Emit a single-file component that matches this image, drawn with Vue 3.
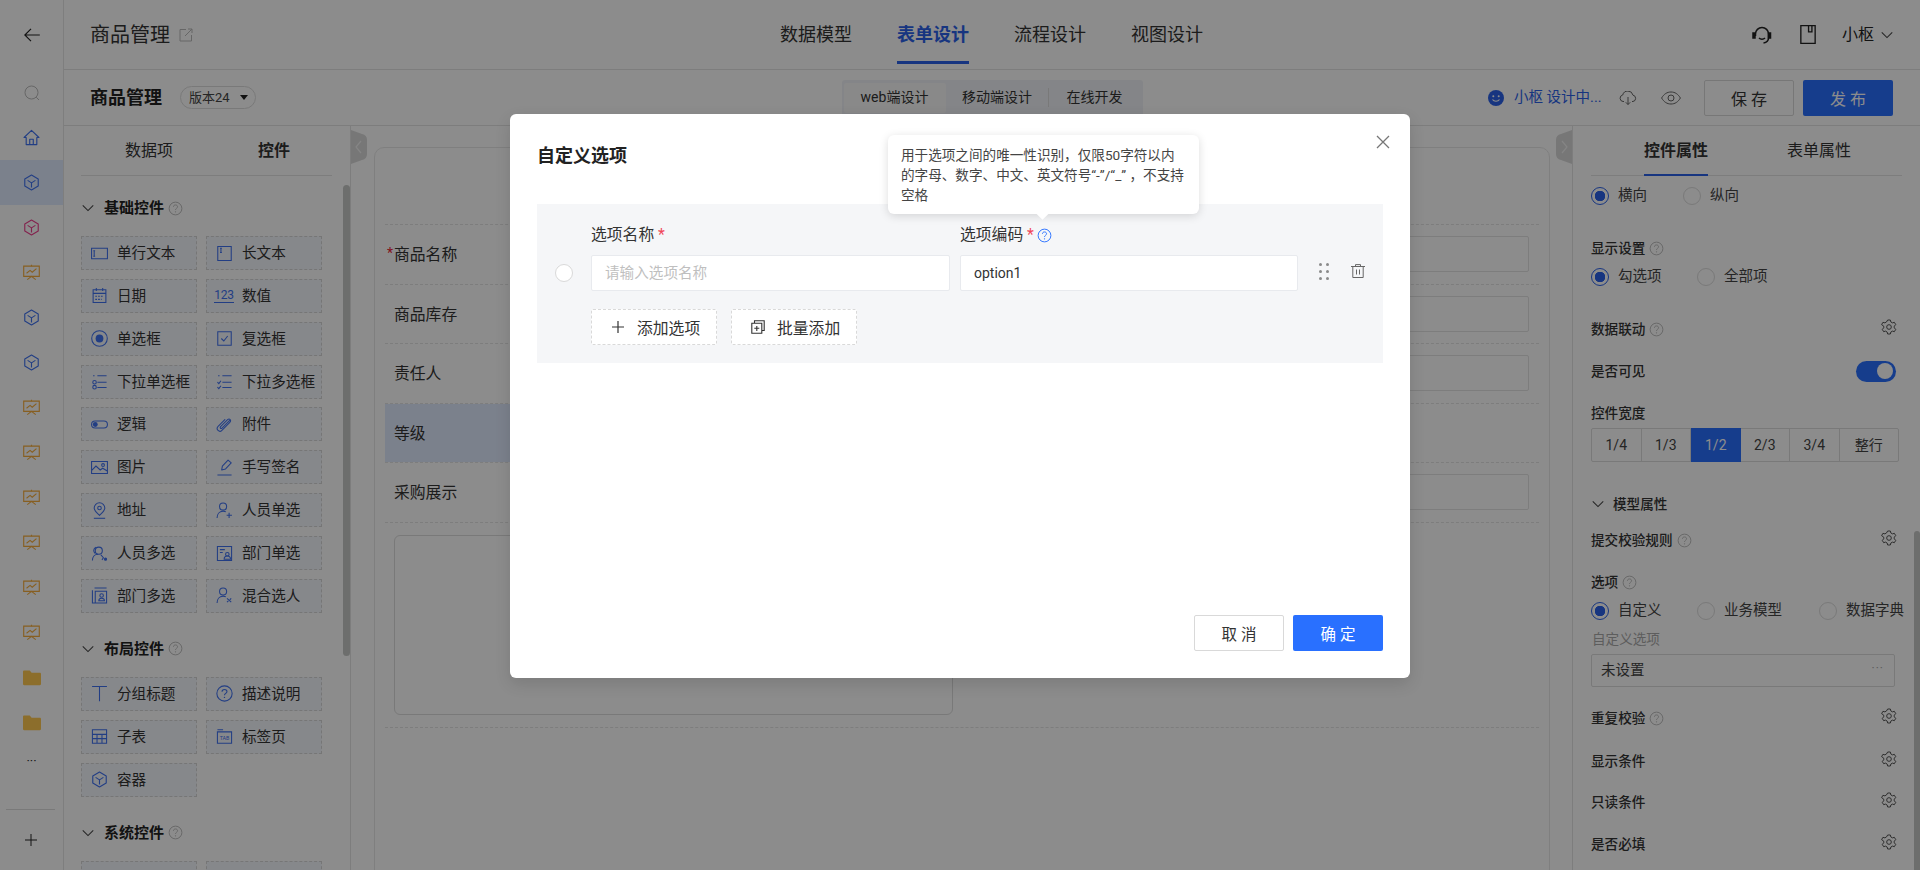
<script setup>
const railItems = [
  { id: 'i-home', tone: 'blue' },
  { id: 'i-cube', tone: 'blue', sel: true },
  { id: 'i-cube', tone: 'pink' },
  { id: 'i-board', tone: 'orange' },
  { id: 'i-cube', tone: 'blue' },
  { id: 'i-cube', tone: 'blue' },
  { id: 'i-board', tone: 'orange' },
  { id: 'i-board', tone: 'orange' },
  { id: 'i-board', tone: 'orange' },
  { id: 'i-board', tone: 'orange' },
  { id: 'i-board', tone: 'orange' },
  { id: 'i-board', tone: 'orange' },
  { id: 'i-folder', tone: 'folder' },
  { id: 'i-folder', tone: 'folder' },
]
const basic = [
  ['单行文本', 'i-single'], ['长文本', 'i-long'], ['日期', 'i-date'], ['数值', 'i-num'],
  ['单选框', 'i-radio'], ['复选框', 'i-check'], ['下拉单选框', 'i-drop'], ['下拉多选框', 'i-dropm'],
  ['逻辑', 'i-toggle'], ['附件', 'i-clip'], ['图片', 'i-pic'], ['手写签名', 'i-pen'],
  ['地址', 'i-pin'], ['人员单选', 'i-user'], ['人员多选', 'i-users'], ['部门单选', 'i-dept'],
  ['部门多选', 'i-deptm'], ['混合选人', 'i-mix'],
]
const layout = [
  ['分组标题', 'i-t'], ['描述说明', 'i-help'], ['子表', 'i-table'], ['标签页', 'i-tab'], ['容器', 'i-cube'],
]
const system = [['', ''], ['', '']]
const sections = [
  { title: '基础控件', items: basic },
  { title: '布局控件', items: layout },
  { title: '系统控件', items: system },
]
const widths = ['1/4', '1/3', '1/2', '2/3', '3/4', '整行']
</script>

<template>
  <div class="page">
    <svg class="sprite" aria-hidden="true">
      <symbol id="i-home" viewBox="0 0 24 24" fill="none" stroke="currentColor" stroke-width="1.6" stroke-linejoin="round"><path d="M1.5 12 12 2l10.5 10h-3v10h-15V12z"/><path d="M9.5 22v-7.5h5V22"/></symbol>
      <symbol id="i-cube" viewBox="0 0 24 24" fill="none" stroke="currentColor" stroke-width="1.6" stroke-linejoin="round"><path d="M12 1.5 21.5 7v10L12 22.500 2.500 17V7z"/><path d="M6.500 9 12 12.500 17.500 9M12 12.500V19"/></symbol>
      <symbol id="i-board" viewBox="0 0 24 24" fill="none" stroke="currentColor" stroke-width="1.6"><path d="M1 3h22v14.500H1zM1 3h22"/><path d="M5 13l5-4 3 2.500L19 6.500M6 22l6-4.500 6 4.500M12 1v2"/></symbol>
      <symbol id="i-folder" viewBox="0 0 24 24"><path fill="currentColor" d="M0 3.500C0 2.700.7 2 1.500 2H9l2.500 3h11c.8 0 1.500.7 1.500 1.500V20c0 .8-.7 1.500-1.500 1.500h-21C.7 21.500 0 20.800 0 20z"/></symbol>
      <symbol id="i-single" viewBox="0 0 24 24" fill="none" stroke="currentColor" stroke-width="1.500"><path d="M.8 4.500h22.400v15H.8zM4.500 8v8M3.200 8h2.600M3.200 16h2.600"/></symbol>
      <symbol id="i-long" viewBox="0 0 24 24" fill="none" stroke="currentColor" stroke-width="1.500"><path d="M2.500 2h19v20h-19zM7 4.500v6M5.700 4.500h2.600M5.700 10.500h2.600"/></symbol>
      <symbol id="i-date" viewBox="0 0 24 24" fill="none" stroke="currentColor" stroke-width="1.500"><path d="M3 4h18v18H3zM3 9h18M7.500 1.500v4M16.500 1.500v4"/><path stroke-dasharray="2.500 1.500" d="M6 13h12M6 17.500h9"/></symbol>
      <symbol id="i-radio" viewBox="0 0 24 24" fill="none" stroke="currentColor" stroke-width="1.500"><circle cx="12" cy="12" r="11"/><circle cx="12" cy="12" r="5.500" fill="currentColor" stroke="none"/></symbol>
      <symbol id="i-check" viewBox="0 0 24 24" fill="none" stroke="currentColor" stroke-width="1.500"><path d="M2.500 2.500h19v19h-19zM7.500 12l3.500 3.500 5.500-7"/></symbol>
      <symbol id="i-drop" viewBox="0 0 24 24" fill="none" stroke="currentColor" stroke-width="1.500"><path d="M3 4h2M9 4h13M9 13h13M9 20.500h13"/><circle cx="5" cy="13" r="2.500"/><circle cx="5" cy="20" r="2.500"/></symbol>
      <symbol id="i-dropm" viewBox="0 0 24 24" fill="none" stroke="currentColor" stroke-width="1.500"><path d="M3 4h2M9 4h13M9 13h13M9 20.500h13M2 13l2 2 3-4M2 20l2 2 3-4"/></symbol>
      <symbol id="i-toggle" viewBox="0 0 24 24" fill="none" stroke="currentColor" stroke-width="1.500"><rect x=".8" y="7" width="22.400" height="10" rx="5"/><circle cx="6" cy="12" r="3.500" fill="currentColor" stroke="none"/></symbol>
      <symbol id="i-clip" viewBox="0 0 24 24" fill="none" stroke="currentColor" stroke-width="1.500" stroke-linecap="round"><path d="M20 5.500 8.500 17c-1.500 1.500-3.500 0-2-2L16 5.500c3-3 6.500.5 3.500 3.500L8 20.500c-3 3-9-1.500-5-6l9.500-9.500"/></symbol>
      <symbol id="i-pic" viewBox="0 0 24 24" fill="none" stroke="currentColor" stroke-width="1.500"><path d="M.8 3.500h22.400v17H.8zM1 16l6-6 6 5.500 3.500-2.500 6.500 4"/><circle cx="17" cy="8.500" r="2"/></symbol>
      <symbol id="i-pen" viewBox="0 0 24 24" fill="none" stroke="currentColor" stroke-width="1.500" stroke-linejoin="round"><path d="M8 15.500 9 10l8-8.500 4.500 4L13.500 14zM2 22.500h20"/></symbol>
      <symbol id="i-pin" viewBox="0 0 24 24" fill="none" stroke="currentColor" stroke-width="1.500"><path d="M12 19C7 14.500 4.500 11.500 4.500 8.500a7.500 7.500 0 0 1 15 0c0 3-2.500 6-7.500 10.500z"/><circle cx="12" cy="8.500" r="2.500"/><path d="M4 23h16"/></symbol>
      <symbol id="i-user" viewBox="0 0 24 24" fill="none" stroke="currentColor" stroke-width="1.500"><circle cx="10" cy="6.500" r="5"/><path d="M1.500 22.500c0-5 3-9.500 8.500-9.500 1.500 0 3 .3 4 1M18.500 15v7.500M15 18.800h7.500"/></symbol>
      <symbol id="i-users" viewBox="0 0 24 24" fill="none" stroke="currentColor" stroke-width="1.500"><circle cx="11" cy="8" r="5"/><path d="M2 22c0-5 3-9 8-9M7 3C3 5 3 10 6 12M14 14l3.500 4-2 3"/><circle cx="20.500" cy="20" r="1.500" fill="currentColor"/></symbol>
      <symbol id="i-dept" viewBox="0 0 24 24" fill="none" stroke="currentColor" stroke-width="1.500"><path d="M2 2h20v20H2zM5.500 6.500h7M5.500 10.500h4"/><circle cx="16" cy="13" r="2.500"/><path d="M11.500 20c0-3 2-4.500 4.500-4.500s4.500 1.500 4.500 4.500z"/></symbol>
      <symbol id="i-deptm" viewBox="0 0 24 24" fill="none" stroke="currentColor" stroke-width="1.500"><path d="M5 1.500h17M2 4.500v18h20V6H6v16"/><circle cx="15" cy="12" r="2.500"/><path d="M11 19.500c0-2.500 2-3.500 4-3.500s4 1 4 3.500z"/></symbol>
      <symbol id="i-mix" viewBox="0 0 24 24" fill="none" stroke="currentColor" stroke-width="1.500"><circle cx="10" cy="6.500" r="5"/><path d="M1.500 22.500c0-5 3-9.500 8.500-9.500 1.500 0 3 .3 4 1M15.500 16l6 5.500M15.500 21.500l2-2M21.500 16l-2 2"/></symbol>
      <symbol id="i-t" viewBox="0 0 24 24" fill="none" stroke="currentColor" stroke-width="1.500"><path d="M1.500 2h21M12 2v21"/></symbol>
      <symbol id="i-help" viewBox="0 0 24 24" fill="none" stroke="currentColor" stroke-width="1.500"><circle cx="12" cy="12" r="10.800"/><path d="M8.500 9.500C8.500 7.500 10 6.300 12 6.300s3.500 1.200 3.500 3c0 2.500-3.500 2.700-3.500 5.200"/><circle cx="12" cy="17.500" r="1" fill="currentColor" stroke="none"/></symbol>
      <symbol id="i-table" viewBox="0 0 24 24" fill="none" stroke="currentColor" stroke-width="1.500"><path d="M2 2.500h20v19H2zM2 9h20M2 15h20M8.500 9v12.500M15.500 9v12.500"/></symbol>
      <symbol id="i-q" viewBox="0 0 16 16" fill="none" stroke="currentColor" stroke-width="1"><circle cx="8" cy="8" r="6.800"/><path d="M5.800 6.200C5.800 5 6.700 4.200 8 4.200s2.200.8 2.200 1.900c0 1.600-2.200 1.800-2.200 3.400"/><circle cx="8" cy="11.500" r=".7" fill="currentColor" stroke="none"/></symbol>
      <symbol id="i-gear" viewBox="0 0 24 24" fill="none" stroke="currentColor" stroke-width="1.500" stroke-linejoin="round"><path d="M10 1.500h4l.8 3 2.300 1.300 3-.8 2 3.500-2.200 2.200v2.600l2.200 2.200-2 3.500-3-.8-2.300 1.300-.8 3h-4l-.8-3-2.300-1.300-3 .8-2-3.500 2.200-2.200v-2.600L.9 8.500l2-3.500 3 .8 2.300-1.300z"/><circle cx="12" cy="12" r="3.500"/></symbol>
      <symbol id="i-chev" viewBox="0 0 16 16" fill="none" stroke="currentColor" stroke-width="1.200"><path d="M2 5l6 6 6-6"/></symbol>
    </svg>

    <aside class="rail">
      <div class="rail-cell rail-back">
        <svg class="rail-arrow" viewBox="0 0 16 16" fill="none" stroke="currentColor" stroke-width="1.200"><path d="M.8 8h15M7 1.800.8 8 7 14.200"/></svg>
      </div>
      <div class="rail-cell">
        <svg class="rail-search" viewBox="0 0 16 16" fill="none" stroke="currentColor" stroke-width="1"><circle cx="7.500" cy="7.500" r="6.500"/><path d="M12.200 12.200 15 15"/></svg>
      </div>
      <div v-for="(r, i) in railItems" :key="i" class="rail-cell" :class="[r.tone, { sel: r.sel }]">
        <svg class="rail-ic"><use :href="'#' + r.id" /></svg>
      </div>
      <div class="rail-more">···</div>
      <div class="rail-foot">
        <svg class="rail-plus" viewBox="0 0 12 12" fill="none" stroke="currentColor" stroke-width="1"><path d="M6 0v12M0 6h12"/></svg>
      </div>
    </aside>

    <div class="main">
      <header class="topbar">
        <div class="top-left">
          <span class="app-name">商品管理</span>
          <svg class="ext" viewBox="0 0 14 14" fill="none" stroke="currentColor" stroke-width="1"><path d="M7 1.500H1v11.500h11.500V7M6 8l7-7M9 1h4v4"/></svg>
        </div>
        <nav class="nav">
          <a class="nav-item">数据模型</a>
          <a class="nav-item active">表单设计</a>
          <a class="nav-item">流程设计</a>
          <a class="nav-item">视图设计</a>
        </nav>
        <div class="top-right">
          <svg class="headset" viewBox="0 0 20 20" fill="none" stroke="currentColor" stroke-width="1.500"><path d="M3.500 11V9a6.500 6.500 0 0 1 13 0v4c0 2.500-2 4.500-5 5"/><path d="M7 13c1.500 1.500 4.500 1.500 6 0"/><rect x="1" y="8" width="2" height="5" fill="currentColor"/><rect x="16.500" y="8" width="2" height="5" fill="currentColor"/></svg>
          <svg class="book" viewBox="0 0 14 17" fill="none" stroke="currentColor" stroke-width="1.200"><path d="M.6.6h12.800v15.800H.6zM7.500.6v5.500h3V.6"/></svg>
          <span class="user-name">小枢</span>
          <svg class="user-chev"><use href="#i-chev" /></svg>
        </div>
      </header>

      <div class="subbar">
        <div class="sub-left">
          <strong class="sub-title">商品管理</strong>
          <span class="version">版本24<i class="caret"></i></span>
        </div>
        <div class="modes">
          <span class="mode mode-web">web端设计</span>
          <span class="mode mode-mobile">移动端设计</span>
          <span class="mode mode-dev">在线开发</span>
        </div>
        <div class="sub-right">
          <svg class="smile" viewBox="0 0 16 16"><circle cx="8" cy="8" r="8" fill="currentColor"/><circle cx="5.300" cy="6.300" r="1" fill="#fff"/><circle cx="10.700" cy="6.300" r="1" fill="#fff"/><path d="M4.500 9.500c1.500 2.300 5.500 2.300 7 0" fill="none" stroke="#fff" stroke-width="1.100"/></svg>
          <span class="status">小枢 设计中...</span>
          <svg class="cloud" viewBox="0 0 18 14" fill="none" stroke="currentColor" stroke-width="1"><path d="M5 10.500H4A3.300 3.300 0 0 1 3.700 4 5.300 5.300 0 0 1 14 4.200a3.200 3.200 0 0 1 0 6.300h-1M9 6v7.500M6.800 11.300 9 13.500l2.200-2.200"/></svg>
          <svg class="eye" viewBox="0 0 20 14" fill="none" stroke="currentColor" stroke-width="1"><path d="M.6 7C3 3 6 1 10 1s7 2 9.400 6C17 11 14 13 10 13S3 11 .6 7z"/><circle cx="10" cy="7" r="3"/></svg>
          <button class="btn-save">保存</button>
          <button class="btn-pub">发布</button>
        </div>
      </div>

      <div class="body">
        <section class="left">
          <div class="tabs tabs-left">
            <span class="tab">数据项</span>
            <span class="tab strong">控件</span>
          </div>
          <div v-for="s in sections" :key="s.title" class="group">
            <div class="group-head">
              <svg class="chev"><use href="#i-chev" /></svg>
              <b>{{ s.title }}</b>
              <svg class="q"><use href="#i-q" /></svg>
            </div>
            <div class="widgets">
              <div v-for="(it, i) in s.items" :key="i" class="widget">
                <span class="w-ic">
                  <span v-if="it[1] === 'i-num'" class="num-ic">123</span>
                  <svg v-else-if="it[1] === 'i-tab'" class="w-svg" viewBox="0 0 24 24" fill="none" stroke="currentColor" stroke-width="1.500"><path d="M2 2.500h8M2 5.500h20v16H2z"/><text x="12" y="16.500" text-anchor="middle" font-size="7.500" fill="currentColor" stroke="none" font-family="Roboto, sans-serif">TAB</text></svg>
                  <svg v-else-if="it[1]" class="w-svg"><use :href="'#' + it[1]" /></svg>
                </span>
                <span class="w-text">{{ it[0] }}</span>
              </div>
            </div>
          </div>
          <i class="left-scroll"></i>
        </section>

        <section class="center">
          <svg class="handle handle-l" viewBox="0 0 16 34"><path d="M0 0 11 4q5 1 5 6v14q0 5-5 6L0 34z" fill="#d9d9d9"/><path d="M10 11l-5 6 5 6" fill="none" stroke="#f2f2f2" stroke-width="1.200"/></svg>
          <svg class="handle handle-r" viewBox="0 0 16 34"><path d="M16 0 5 4q-5 1-5 6v14q0 5 5 6l11 4z" fill="#d9d9d9"/><path d="M6 11l5 6-5 6" fill="none" stroke="#f2f2f2" stroke-width="1.200"/></svg>
          <div class="card">
            <div class="form-row"><span class="f-label"><em>*</em>商品名称</span><div class="f-input"></div></div>
            <div class="form-row"><span class="f-label">商品库存</span><div class="f-input"></div></div>
            <div class="form-row"><span class="f-label">责任人</span><div class="f-input"></div></div>
            <div class="form-row form-row-sel"><div class="sel-half"><span class="f-label">等级</span></div></div>
            <div class="form-row"><span class="f-label">采购展示</span><div class="f-input"></div></div>
            <div class="form-area"><div class="area-box"></div></div>
          </div>
        </section>

        <section class="right">
          <div class="tabs tabs-right">
            <span class="tab strong on">控件属性</span>
            <span class="tab">表单属性</span>
          </div>
          <div class="p-radios mt10">
            <label class="opt w92"><i class="radio on"></i>横向</label>
            <label class="opt"><i class="radio"></i>纵向</label>
          </div>
          <div class="p-row mt32"><span class="p-label">显示设置<svg class="q"><use href="#i-q" /></svg></span></div>
          <div class="p-radios mt9">
            <label class="opt w106"><i class="radio on"></i>勾选项</label>
            <label class="opt"><i class="radio"></i>全部项</label>
          </div>
          <div class="p-row mt32"><span class="p-label">数据联动<svg class="q"><use href="#i-q" /></svg></span><svg class="gear"><use href="#i-gear" /></svg></div>
          <div class="p-row mt22"><span class="p-label">是否可见</span><span class="switch"><i></i></span></div>
          <div class="p-row mt22"><span class="p-label">控件宽度</span></div>
          <div class="width-seg">
            <span v-for="(w, i) in widths" :key="w" class="w-cell" :class="{ on: i === 2 }">{{ w }}</span>
          </div>
          <div class="p-row model-head"><svg class="chev"><use href="#i-chev" /></svg><b class="p-label">模型属性</b></div>
          <div class="p-row mt16"><span class="p-label">提交校验规则<svg class="q"><use href="#i-q" /></svg></span><svg class="gear"><use href="#i-gear" /></svg></div>
          <div class="p-row mt22"><span class="p-label">选项<svg class="q"><use href="#i-q" /></svg></span></div>
          <div class="p-radios mt9">
            <label class="opt w106"><i class="radio on"></i>自定义</label>
            <label class="opt w122"><i class="radio"></i>业务模型</label>
            <label class="opt"><i class="radio"></i>数据字典</label>
          </div>
          <div class="p-hint">自定义选项</div>
          <div class="p-input">未设置<span class="p-dots">···</span></div>
          <div class="p-row mt21"><span class="p-label">重复校验<svg class="q"><use href="#i-q" /></svg></span><svg class="gear"><use href="#i-gear" /></svg></div>
          <div class="p-row mt23"><span class="p-label">显示条件</span><svg class="gear"><use href="#i-gear" /></svg></div>
          <div class="p-row mt21"><span class="p-label">只读条件</span><svg class="gear"><use href="#i-gear" /></svg></div>
          <div class="p-row mt22"><span class="p-label">是否必填</span><svg class="gear"><use href="#i-gear" /></svg></div>
          <i class="right-scroll"></i>
        </section>
      </div>
    </div>

    <div class="mask">
      <div class="modal">
        <h2 class="m-title">自定义选项</h2>
        <svg class="m-close" viewBox="0 0 14 14" fill="none" stroke="currentColor" stroke-width="1.300"><path d="M1 1l12 12M13 1 1 13"/></svg>
        <div class="tooltip">用于选项之间的唯一性识别，仅限50字符以内<br />的字母、数字、中文、英文符号“-”/“_” ，不支持<br />空格</div>
        <div class="m-panel">
          <div class="m-heads">
            <span class="m-head m-head-1">选项名称 <em>*</em></span>
            <span class="m-head">选项编码 <em>*</em><svg class="q-blue"><use href="#i-q" /></svg></span>
          </div>
          <div class="m-row">
            <span class="m-radio-col"><i class="m-radio"></i></span>
            <div class="m-input m-input-1 ph">请输入选项名称</div>
            <div class="m-input m-input-2">option1</div>
            <span class="m-drag"><i></i><i></i><i></i><i></i><i></i><i></i></span>
            <svg class="m-trash" viewBox="0 0 14 14" fill="none" stroke="currentColor" stroke-width="1"><path d="M0 2.500h14M4.500 2.500V.6h5v1.900M1.800 2.500v11h10.400v-11M5.500 5.500v5M8.500 5.500v5"/></svg>
          </div>
          <div class="m-actions">
            <button class="m-dash">
              <svg class="m-a-ic" viewBox="0 0 14 14" fill="none" stroke="currentColor" stroke-width="1.200"><path d="M7 1v12M1 7h12"/></svg>添加选项
            </button>
            <button class="m-dash">
              <svg class="m-a-ic" viewBox="0 0 14 14" fill="none" stroke="currentColor" stroke-width="1.100"><path d="M3.500 3V.8h9.700v9.700H11"/><path d="M.8 3.300h10v10H.8zM5.800 6v5M3.300 8.300h5"/></svg>批量添加
            </button>
          </div>
        </div>
        <div class="m-foot">
          <button class="m-cancel">取 消</button>
          <button class="m-ok">确 定</button>
        </div>
      </div>
    </div>
  </div>
</template>

<style>
html, body { margin: 0; background: #fff; }
</style>

<style scoped>
* { box-sizing: border-box; }
.page {
  position: relative; display: flex; width: 1920px; height: 870px; overflow: hidden; background: #fff; color: #333;
  font-family: Roboto, "Noto Sans CJK SC", sans-serif; font-size: 14px; line-height: 20px;
}
.sprite { position: absolute; width: 0; height: 0; }
i, em { font-style: normal; }
button { font-family: inherit; padding: 0; margin: 0; cursor: pointer; }

.rail { width: 64px; flex: none; height: 870px; display: flex; flex-direction: column; border-right: 1px solid #e6e6e6; background: #fff; }
.rail-cell { height: 45px; flex: none; display: flex; align-items: center; justify-content: center; }
.rail-back { height: 70px; color: #222; }
.rail-arrow { width: 16px; height: 16px; }
.rail-search { width: 16px; height: 16px; color: #bbb; }
.rail-ic { width: 17px; height: 17px; }
.rail-cell.sel { background: #e1ebff; }
.blue { color: #3f72f0; }
.pink { color: #ef3f8e; }
.orange { color: #f6ad3c; }
.folder { color: #ffc850; }
.folder .rail-ic { width: 18px; height: 18px; }
.rail-more { height: 34px; text-align: center; line-height: 32px; font-size: 13px; color: #333; letter-spacing: 0; }
.rail-foot { margin: auto 8px 0 6px; height: 61px; border-top: 1px solid #ddd; display: flex; align-items: center; justify-content: center; color: #222; }
.rail-plus { width: 12px; height: 12px; }

.main { flex: 1; min-width: 0; display: flex; flex-direction: column; }
.topbar { height: 70px; flex: none; display: grid; grid-template-columns: 1fr auto 1fr; border-bottom: 1px solid #e3e3e3; }
.top-left { display: flex; align-items: center; padding-left: 26px; }
.app-name { font-size: 20px; line-height: 28px; color: #333; }
.ext { width: 14px; height: 14px; margin-left: 9px; color: #bbb; }
.nav { display: flex; gap: 45px; margin-left: -1px; }
.nav-item { position: relative; display: block; font-size: 18px; line-height: 70px; height: 69px; color: #333; }
.nav-item.active { color: #2b62ea; font-weight: 700; }
.nav-item.active::after { content: ""; position: absolute; left: 0; right: 0; top: 61px; height: 3px; background: #2b62ea; }
.top-right { display: flex; align-items: center; justify-content: flex-end; padding-right: 26px; color: #222; }
.headset { width: 20px; height: 20px; }
.book { width: 16px; height: 19px; margin-left: 28px; }
.user-name { margin-left: 26px; font-size: 16px; }
.user-chev { width: 14px; height: 14px; margin-left: 6px; color: #444; }

.subbar { height: 56px; flex: none; display: grid; grid-template-columns: 1fr auto 1fr; align-items: center; border-bottom: 1px solid #e3e3e3; }
.sub-left { display: flex; align-items: center; padding-left: 26px; }
.sub-title { font-size: 18px; line-height: 24px; color: #222; }
.version { display: flex; align-items: center; width: 76px; height: 23px; margin-left: 18px; padding-left: 8px; border: 1px solid #ddd; border-radius: 12px; font-size: 13px; color: #444; }
.caret { width: 0; height: 0; margin-left: 10px; border: 4px solid transparent; border-top: 5px solid #222; border-bottom: 0; }
.modes { display: flex; width: 301px; height: 36px; padding: 3px 2px; background: #f1f3f7; border-radius: 3px; }
.mode { display: block; text-align: center; font-size: 14px; line-height: 29px; color: #333; }
.mode-web { width: 102px; background: #fafafa; border-radius: 3px; }
.mode-mobile { width: 103px; background: linear-gradient(#ddd, #ddd) right 5px / 1px 19px no-repeat; }
.mode-dev { width: 92px; }
.sub-right { display: flex; align-items: center; justify-content: flex-end; padding-right: 27px; }
.smile { width: 16px; height: 16px; color: #2b62ea; }
.status { width: 86px; margin-left: 10px; font-size: 14.500px; color: #2b62ea; white-space: nowrap; }
.cloud { width: 18px; height: 14px; margin-left: 19px; color: #666; }
.eye { width: 20px; height: 14px; margin-left: 24px; color: #666; }
.btn-save, .btn-pub { width: 90px; height: 36px; border-radius: 2px; font-size: 16px; letter-spacing: 4px; text-indent: 4px; }
.btn-save { margin-left: 23px; background: #fff; border: 1px solid #d9d9d9; color: #333; }
.btn-pub { margin-left: 9px; background: #2970ff; border: 0; color: #fff; }

.body { flex: 1; min-height: 0; display: flex; }
.left { position: relative; width: 287px; flex: none; padding-left: 17px; border-right: 1px solid #e3e3e3; overflow: hidden; }
.tabs { display: flex; height: 50px; align-items: center; border-bottom: 1px solid #e3e3e3; font-size: 16px; }
.tabs-left { width: 251px; padding-left: 44px; gap: 85px; }
.tabs-right { width: 311px; padding-left: 53px; gap: 79px; }
.tab { position: relative; line-height: 50px; }
.tab.strong { font-weight: 700; }
.tab.on::after { content: ""; position: absolute; left: 0; right: 0; bottom: 0; height: 2px; background: #2b62ea; }
.group { margin-top: 22px; }
.group + .group { margin-top: 26px; }
.group-head { display: flex; align-items: center; height: 20px; font-size: 15px; color: #222; }
.chev { width: 14px; height: 14px; color: #444; flex: none; }
.group-head .chev { margin-right: 9px; }
.q { width: 15px; height: 15px; margin-left: 4px; color: #bbb; flex: none; }
.widgets { display: grid; grid-template-columns: 116px 116px; column-gap: 9px; row-gap: 8.860px; margin-top: 18px; }
.widget { display: flex; align-items: center; height: 34px; padding-left: 5px; border: 1px dashed #d8d8d8; background: #f5f7fd; }
.w-ic { width: 24px; height: 20px; display: flex; align-items: center; justify-content: center; color: #3f72f0; flex: none; }
.w-svg { width: 17px; height: 17px; }
.num-ic { font-size: 12px; line-height: 14px; border-bottom: 1px solid currentColor; letter-spacing: -.3px; }
.w-text { margin-left: 6px; font-size: 14.600px; white-space: nowrap; color: #333; }
.left-scroll { position: absolute; left: 279px; top: 59px; width: 7px; height: 471px; border-radius: 4px; background: #c7c9c7; }

.center { position: relative; flex: 1; min-width: 0; padding: 21px 22px 0 23px; }
.handle { position: absolute; top: 4px; width: 16px; height: 34px; }
.handle-l { left: 0; }
.handle-r { right: 0; }
.card { height: 800px; padding: 76px 10px 0; border: 1px solid #e8e8e8; border-radius: 10px; background: #fff; }
.form-row { display: flex; align-items: center; height: 59.500px; padding: 0 10px 0 9px; border-top: 1px dashed #e3e3e3; }
.form-row-sel { padding: 0; }
.sel-half { display: flex; align-items: center; width: 577px; height: 100%; padding-left: 9px; background: #e1ebff; }
.f-label { position: relative; width: 200px; flex: none; margin-top: 2px; font-size: 15.800px; color: #333; }
.f-label em { position: absolute; left: -7px; top: -2px; color: #e23; font-size: 14px; }
.f-input { flex: 1; height: 36px; border: 1px solid #e3e3e3; border-radius: 2px; }
.form-area { padding: 12px 0 12px 9px; border-top: 1px dashed #e3e3e3; border-bottom: 1px dashed #e3e3e3; }
.area-box { width: 559px; height: 180px; border: 1px solid #ddd; border-radius: 6px; }

.right { position: relative; width: 348px; flex: none; padding-left: 18px; border-left: 1px solid #e3e3e3; overflow: hidden; }
.p-radios { display: flex; height: 20px; }
.opt { display: flex; align-items: center; font-size: 14.500px; color: #444; white-space: nowrap; }
.radio { width: 18px; height: 18px; margin-right: 9px; border: 1px solid #ddd; border-radius: 50%; flex: none; }
.radio.on { border-color: #2b62ea; background: radial-gradient(circle, #2b62ea 0 5px, #fff 5.500px); }
.w92 { width: 92px; }
.w106 { width: 106px; }
.w122 { width: 122px; }
.p-row { display: flex; align-items: center; justify-content: space-between; width: 307px; height: 20px; }
.p-label { display: flex; align-items: center; font-size: 13.600px; font-weight: 500; color: #333; }
.gear { width: 16px; height: 16px; margin: 0 1px 4px 0; color: #555; }
.switch { display: flex; justify-content: flex-end; align-items: center; width: 40px; height: 21px; margin-right: 2px; padding-right: 3px; border-radius: 11px; background: #2970ff; }
.switch i { width: 16px; height: 16px; border-radius: 50%; background: #fff; }
.width-seg { display: flex; width: 308px; height: 34px; margin-top: 5px; border: 1px solid #ddd; border-radius: 2px; }
.w-cell { flex: 1 1 49px; text-align: center; font-size: 14px; line-height: 32px; border-right: 1px solid #ddd; color: #444; }
.w-cell:last-child { border-right: 0; flex-basis: 58px; }
.w-cell.on { margin: -1px 0; background: #2970ff; color: #fff; line-height: 34px; border-right: 0; }
.model-head { justify-content: flex-start; margin-top: 32px; }
.model-head .chev { margin-right: 8px; }
.p-hint { margin-top: 8px; height: 20px; padding-left: 1px; font-size: 13.600px; color: #aaa; }
.p-input { position: relative; width: 304px; height: 33px; margin-top: 5px; padding-left: 9px; border: 1px solid #ddd; border-radius: 2px; font-size: 14.500px; line-height: 31px; color: #444; }
.p-dots { position: absolute; right: 10px; top: -2px; color: #aaa; letter-spacing: 1px; font-size: 12px; }
.mt9 { margin-top: 9px; }
.mt10 { margin-top: 10px; }
.mt16 { margin-top: 16px; }
.mt21 { margin-top: 21px; }
.mt22 { margin-top: 22px; }
.mt23 { margin-top: 23px; }
.mt32 { margin-top: 32px; }
.right-scroll { position: absolute; right: 0; top: 405px; width: 6px; height: 340px; border-radius: 3px 3px 0 0; background: #c7c9c7; }

.mask { position: absolute; inset: 0; display: flex; justify-content: center; padding-top: 114px; background: rgba(0, 0, 0, .45); }
.modal { position: relative; display: flex; flex-direction: column; width: 900px; height: 564px; padding: 0 27px 27px; background: #fff; border-radius: 6px; box-shadow: 0 6px 16px rgba(0, 0, 0, .12); }
.m-title { margin: 30px 0 0; font-size: 18px; line-height: 24px; font-weight: 700; color: #222; }
.m-close { position: absolute; right: 20px; top: 21px; width: 14px; height: 14px; color: #777; }
.tooltip { position: absolute; z-index: 2; left: 378px; top: 21px; width: 311px; height: 79px; padding: 10px 0 0 13px; background: #fff; border-radius: 6px; box-shadow: 0 2px 10px rgba(0, 0, 0, .14); font-size: 13.600px; line-height: 20px; color: #444; white-space: nowrap; }
.tooltip::after { content: ""; position: absolute; left: 150px; bottom: -4px; width: 9px; height: 9px; background: #fff; transform: rotate(45deg); }
.m-panel { height: 159px; margin-top: 36px; padding-top: 21px; background: #f5f6f8; }
.m-heads { display: flex; padding-left: 54px; height: 20px; }
.m-head { display: flex; align-items: center; font-size: 15.800px; white-space: pre; color: #333; }
.m-head-1 { width: 369px; }
.m-head em { color: #f0475a; }
.q-blue { width: 15px; height: 15px; margin-left: 3px; color: #2970ff; }
.m-row { display: flex; align-items: center; margin-top: 10px; height: 36px; }
.m-radio-col { width: 54px; padding-left: 18px; flex: none; display: flex; }
.m-radio { width: 18px; height: 18px; border: 1px solid #d9d9d9; border-radius: 50%; background: #fff; }
.m-input { height: 36px; padding-left: 13px; background: #fff; border: 1px solid #e8eaee; border-radius: 2px; font-size: 14px; line-height: 35px; color: #333; }
.m-input-1 { width: 359px; }
.m-input-2 { width: 338px; margin-left: 10px; }
.ph { font-size: 14.600px; color: #bfbfbf; }
.m-drag { display: grid; grid-template-columns: 3px 3px; gap: 4px 4px; margin: 0 0 4px 21px; }
.m-drag i { width: 3px; height: 3px; border-radius: 50%; background: #8a8a8a; }
.m-trash { width: 14px; height: 14px; margin: 0 0 4px 22px; color: #666; }
.m-actions { display: flex; gap: 14px; margin-top: 18px; padding-left: 54px; }
.m-dash { display: flex; align-items: center; width: 126px; height: 36px; padding-left: 19px; background: #fff; border: 1px dashed #d9d9d9; border-radius: 2px; font-size: 15.800px; color: #333; }
.m-a-ic { width: 14px; height: 14px; margin-right: 12px; flex: none; }
.m-foot { display: flex; justify-content: flex-end; gap: 9px; margin-top: auto; }
.m-cancel, .m-ok { width: 90px; height: 36px; border-radius: 2px; font-size: 15.500px; }
.m-cancel { background: #fff; border: 1px solid #d9d9d9; color: #333; }
.m-ok { background: #2970ff; border: 0; color: #fff; }
</style>
